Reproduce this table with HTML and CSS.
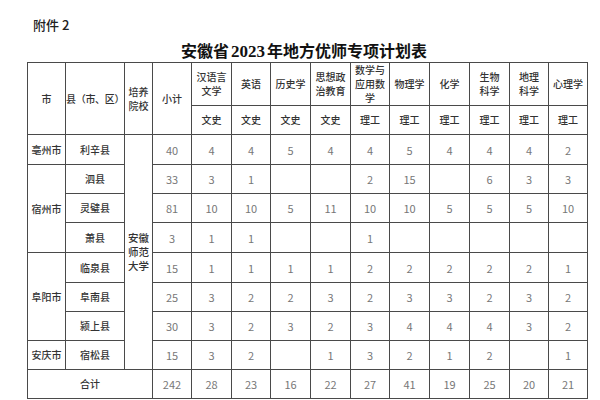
FILE: index.html
```html
<!DOCTYPE html>
<html lang="zh">
<head>
<meta charset="utf-8">
<link rel="stylesheet" href="styles.css">
</head>
<body>
<div class="doc">
  <div class="attach">附件 2</div>
  <h1 class="title">安徽省<span class="num">2023</span>年地方优师专项计划表</h1>
  <table class="plan">
    <colgroup>
      <col class="c-city"><col class="c-county"><col class="c-school"><col class="c-sub">
      <col class="c-s1"><col class="c-s2"><col class="c-s1"><col class="c-s1"><col class="c-s2">
      <col class="c-s1"><col class="c-s1"><col class="c-s1"><col class="c-s2"><col class="c-s2">
    </colgroup>
    <thead>
      <tr class="h1">
        <th rowspan="2">市</th>
        <th rowspan="2" class="left">县（市、区）</th>
        <th rowspan="2">培养院校</th>
        <th rowspan="2">小计</th>
        <th>汉语言<br>文学</th>
        <th>英语</th>
        <th>历史学</th>
        <th>思想政<br>治教育</th>
        <th>数学与<br>应用数<br>学</th>
        <th>物理学</th>
        <th>化学</th>
        <th>生物<br>科学</th>
        <th>地理<br>科学</th>
        <th>心理学</th>
      </tr>
      <tr class="h2">
        <th>文史</th><th>文史</th><th>文史</th><th>文史</th>
        <th>理工</th><th>理工</th><th>理工</th><th>理工</th><th>理工</th><th>理工</th>
      </tr>
    </thead>
    <tbody>
      <tr class="r30">
        <th>亳州市</th><th>利辛县</th>
        <th rowspan="8" class="school">安徽师范大学</th>
        <td>40</td><td>4</td><td>4</td><td>5</td><td>4</td><td>4</td><td>5</td><td>4</td><td>4</td><td>4</td><td>2</td>
      </tr>
      <tr>
        <th rowspan="3">宿州市</th><th>泗县</th>
        <td>33</td><td>3</td><td>1</td><td></td><td></td><td>2</td><td>15</td><td></td><td>6</td><td>3</td><td>3</td>
      </tr>
      <tr>
        <th>灵璧县</th>
        <td>81</td><td>10</td><td>10</td><td>5</td><td>11</td><td>10</td><td>10</td><td>5</td><td>5</td><td>5</td><td>10</td>
      </tr>
      <tr class="r30">
        <th>萧县</th>
        <td>3</td><td>1</td><td>1</td><td></td><td></td><td>1</td><td></td><td></td><td></td><td></td><td></td>
      </tr>
      <tr class="r30">
        <th rowspan="3">阜阳市</th><th>临泉县</th>
        <td>15</td><td>1</td><td>1</td><td>1</td><td>1</td><td>2</td><td>2</td><td>2</td><td>2</td><td>2</td><td>1</td>
      </tr>
      <tr>
        <th>阜南县</th>
        <td>25</td><td>3</td><td>2</td><td>2</td><td>3</td><td>2</td><td>3</td><td>3</td><td>2</td><td>3</td><td>2</td>
      </tr>
      <tr>
        <th>颍上县</th>
        <td>30</td><td>3</td><td>2</td><td>3</td><td>2</td><td>3</td><td>4</td><td>4</td><td>4</td><td>3</td><td>2</td>
      </tr>
      <tr>
        <th>安庆市</th><th>宿松县</th>
        <td>15</td><td>3</td><td>2</td><td></td><td>1</td><td>3</td><td>2</td><td>1</td><td>2</td><td></td><td>1</td>
      </tr>
      <tr>
        <th colspan="3">合计</th>
        <td>242</td><td>28</td><td>23</td><td>16</td><td>22</td><td>27</td><td>41</td><td>19</td><td>25</td><td>20</td><td>21</td>
      </tr>
    </tbody>
  </table>
</div>
</body>
</html>
```

FILE: styles.css
```css
html, body {
  margin: 0;
  padding: 0;
  background: #ffffff;
}

.doc {
  padding-top: 17px;
  font-family: "Noto Sans CJK SC", "Noto Sans", sans-serif;
}

.attach {
  padding-left: 33px;
  font-size: 13px;
  line-height: 16px;
  color: #222;
  font-weight: 500;
}

.title {
  margin: 7px 0 0 0;
  text-align: center;
  font-size: 16px;
  line-height: 20px;
  font-weight: 700;
  color: #111;
  padding-left: 8px;
}

.title .num {
  font-family: "Liberation Serif", serif;
  font-weight: 700;
  font-size: 17px;
  margin: 0 2px;
}

.plan {
  margin-left: 27px;
  width: 561px;
  table-layout: fixed;
  border-collapse: collapse;
}

.c-city { width: 38px; }
.c-county { width: 59px; }
.c-school { width: 28px; }
.c-sub { width: 39px; }
.c-s1 { width: 40px; }
.c-s2 { width: 39px; }

.plan th,
.plan td {
  border: 1px solid #4a4a4a;
  padding: 0 2px;
  text-align: center;
  vertical-align: middle;
  font-size: 10px;
  line-height: 12px;
}

.plan th {
  font-weight: 500;
  color: #333;
}

.plan tr.h1 th {
  line-height: 14px;
  padding: 0;
}

.plan th.left {
  text-align: left;
  padding-left: 1px;
  white-space: nowrap;
  letter-spacing: -0.3px;
}

.plan td {
  color: #777;
  font-size: 11px;
  font-weight: 400;
}

.plan tr.h1 { height: 40px; }
.plan tr.h2 { height: 29px; }
.plan tbody tr { height: 29px; }
.plan tbody tr.r30 { height: 30px; }

.plan th.school {
  padding: 0 3px;
  line-height: 14px;
  font-size: 10.5px;
}
```
